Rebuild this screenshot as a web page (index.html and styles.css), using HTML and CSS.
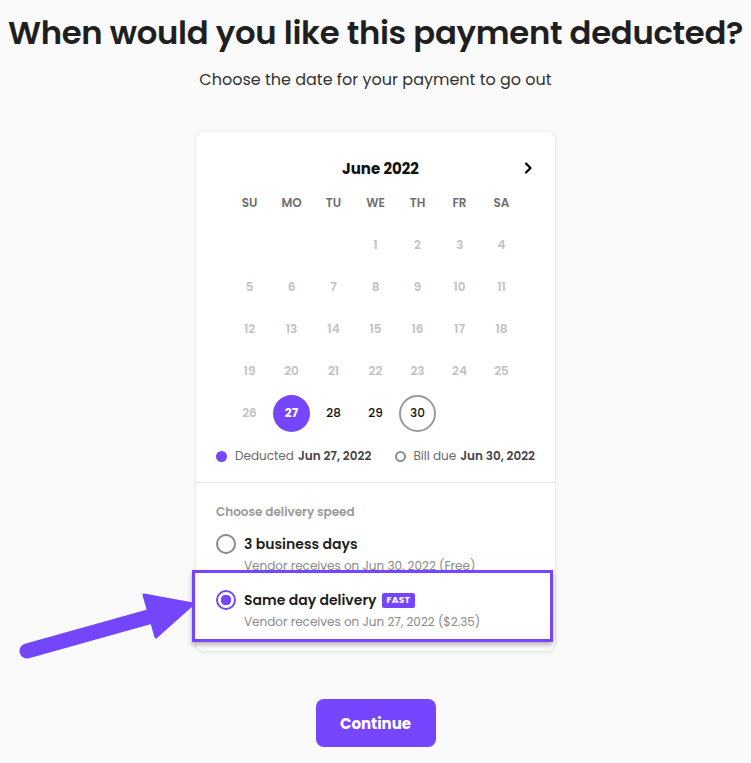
FILE: index.html
```html
<!DOCTYPE html>
<html lang="en">

<head>
    <meta charset="UTF-8">
    <meta name="viewport" content="width=device-width, initial-scale=1.0">
    <title>Payment date</title>
    <link rel="stylesheet" href="styles.css">
</head>

<body>
    <div class="page">
        <h1 class="title">When would you like this payment deducted?</h1>
        <p class="subtitle">Choose the date for your payment to go out</p>

        <div class="card">
            <!-- calendar -->
            <div class="cal">
                <div class="cal-head">
                    <span></span>
                    <span class="cal-month">June 2022</span>
                    <span class="cal-next">
                        <svg width="10" height="12" viewBox="0 0 10 12"><path d="M3 1.5 L7.5 6 L3 10.5" fill="none" stroke="#000" stroke-width="2.2" stroke-linecap="round" stroke-linejoin="round"/></svg>
                    </span>
                </div>
                <div class="cal-grid">
                    <span class="wd">SU</span><span class="wd">MO</span><span class="wd">TU</span><span class="wd">WE</span><span class="wd">TH</span><span class="wd">FR</span><span class="wd">SA</span>

                    <span></span><span></span><span></span>
                    <span class="day off">1</span><span class="day off">2</span><span class="day off">3</span><span class="day off">4</span>
                    <span class="day off">5</span><span class="day off">6</span><span class="day off">7</span><span class="day off">8</span><span class="day off">9</span><span class="day off">10</span><span class="day off">11</span>
                    <span class="day off">12</span><span class="day off">13</span><span class="day off">14</span><span class="day off">15</span><span class="day off">16</span><span class="day off">17</span><span class="day off">18</span>
                    <span class="day off">19</span><span class="day off">20</span><span class="day off">21</span><span class="day off">22</span><span class="day off">23</span><span class="day off">24</span><span class="day off">25</span>
                    <span class="day off">26</span>
                    <span class="day"><b class="mark picked">27</b></span>
                    <span class="day">28</span>
                    <span class="day">29</span>
                    <span class="day"><b class="mark due">30</b></span>
                </div>
                <div class="legend">
                    <span class="legend-item"><i class="dot"></i>Deducted <strong>Jun 27, 2022</strong></span>
                    <span class="legend-item"><i class="ring"></i>Bill due <strong>Jun 30, 2022</strong></span>
                </div>
            </div>

            <!-- delivery speed -->
            <div class="speed">
                <div class="speed-label">Choose delivery speed</div>
                <div class="option">
                    <i class="radio"></i>
                    <div class="option-text">
                        <div class="option-name">3 business days</div>
                        <div class="option-note">Vendor receives on Jun 30, 2022 (Free)</div>
                    </div>
                </div>
                <div class="option selected">
                    <i class="radio on"></i>
                    <div class="option-text">
                        <div class="option-name">Same day delivery <span class="badge">FAST</span></div>
                        <div class="option-note">Vendor receives on Jun 27, 2022 ($2.35)</div>
                    </div>
                    <div class="highlight"></div>
                </div>
            </div>
        </div>

        <button class="btn">Continue</button>

        <!-- pointer arrow -->
        <svg class="arrow" width="200" height="80" viewBox="0 0 200 80">
            <line x1="27" y1="71" x2="152" y2="36" stroke="#7446fa" stroke-width="15" stroke-linecap="round"/>
            <polygon points="144,15 156,57 193,24" fill="#7446fa" stroke="#7446fa" stroke-width="3" stroke-linejoin="round"/>
        </svg>
    </div>
</body>

</html>
```

FILE: styles.css
```css
* {
    box-sizing: border-box;
}

body {
    margin: 0;
    background: #fafafa;
    font-family: "Poppins", "Inter", "Liberation Sans", sans-serif;
    color: #1e1e1e;
}

.page {
    position: relative;
    display: flex;
    flex-direction: column;
    align-items: center;
    padding-top: 13px;
    min-height: 763px;
}

.title {
    margin: 0;
    font-size: 32.3px;
    font-weight: 600;
    line-height: 40px;
    letter-spacing: -0.3px;
    color: #1f1f1f;
    white-space: nowrap;
}

.subtitle {
    margin: 16px 0 0;
    font-size: 16px;
    line-height: 22px;
    color: #333;
}

/* card */
.card {
    margin-top: 41px;
    width: 359px;
    background: #fff;
    border-radius: 8px;
    box-shadow: 0 1px 4px rgba(0, 0, 0, 0.12);
}

.cal {
    padding: 24px 20px 16px;
    border-bottom: 1px solid #e6e6e6;
}

.cal-head {
    display: grid;
    grid-template-columns: 1fr auto 1fr;
    align-items: center;
    height: 24px;
    padding: 0 2px 0 12px;
}

.cal-month {
    font-size: 15px;
    font-weight: 700;
    color: #111;
}

.cal-next {
    justify-self: end;
    display: flex;
}

.cal-grid {
    display: grid;
    grid-template-columns: repeat(7, 42px);
    grid-auto-rows: 42px;
    justify-content: center;
    margin-top: 2px;
}

.wd,
.day {
    display: flex;
    align-items: center;
    justify-content: center;
    font-size: 12px;
    font-weight: 600;
}

.wd {
    color: #6f6f6f;
}

.day {
    color: #111;
    font-weight: 500;
}

.day.off {
    color: #c2c2c2;
    font-weight: 600;
}

.mark {
    display: flex;
    align-items: center;
    justify-content: center;
    width: 37px;
    height: 37px;
    border-radius: 50%;
    font-weight: 500;
}

.mark.picked {
    background: #7646ff;
    color: #fff;
    font-weight: 700;
}

.mark.due {
    border: 2px solid #9a9a9a;
}

.legend {
    display: flex;
    justify-content: space-between;
    margin-top: 12px;
    font-size: 12px;
    line-height: 20px;
    color: #6a6a6a;
}

.legend-item {
    display: flex;
    align-items: center;
}

.legend-item strong {
    margin-left: 4px;
    font-weight: 600;
    color: #444;
}

.dot,
.ring {
    width: 11px;
    height: 11px;
    border-radius: 50%;
    margin-right: 8px;
}

.dot {
    background: #7646ff;
}

.ring {
    border: 2px solid #8e8e8e;
}

/* delivery speed */
.speed {
    padding: 20px 20px 18px;
}

.speed-label {
    font-size: 12px;
    font-weight: 600;
    line-height: 18px;
    color: #9a9a9a;
}

.option {
    position: relative;
    display: flex;
    align-items: flex-start;
    gap: 8px;
    margin-top: 12px;
}

.option + .option {
    margin-top: 12px;
}

.radio {
    flex: none;
    width: 20px;
    height: 20px;
    margin-top: 1px;
    border-radius: 50%;
    border: 2px solid #8a8a8a;
}

.radio.on {
    border-color: #7646ff;
    background: radial-gradient(circle, #7646ff 0 5px, transparent 5.5px);
}

.option-name {
    display: flex;
    align-items: center;
    gap: 5px;
    font-size: 14px;
    font-weight: 600;
    line-height: 22px;
    color: #1e1e1e;
}

.option-note {
    font-size: 12px;
    line-height: 22px;
    color: #8a8a8a;
}

.badge {
    padding: 0 5px;
    height: 15px;
    line-height: 15px;
    border-radius: 2px;
    background: #7646ff;
    color: #fff;
    font-size: 9px;
    font-weight: 700;
    letter-spacing: 0.3px;
}

/* callout frame drawn over the selected option */
.highlight {
    position: absolute;
    top: -19px;
    bottom: -9px;
    left: -24px;
    right: -18px;
    border: 3px solid #7646ff;
    box-shadow: 0 3px 5px rgba(0, 0, 0, 0.3);
    pointer-events: none;
}

.btn {
    margin-top: 48px;
    width: 120px;
    height: 48px;
    border: none;
    border-radius: 8px;
    background: #7646ff;
    color: #fff;
    font-family: inherit;
    font-size: 15px;
    font-weight: 700;
}

.arrow {
    position: absolute;
    left: 0;
    top: 580px;
}
```
